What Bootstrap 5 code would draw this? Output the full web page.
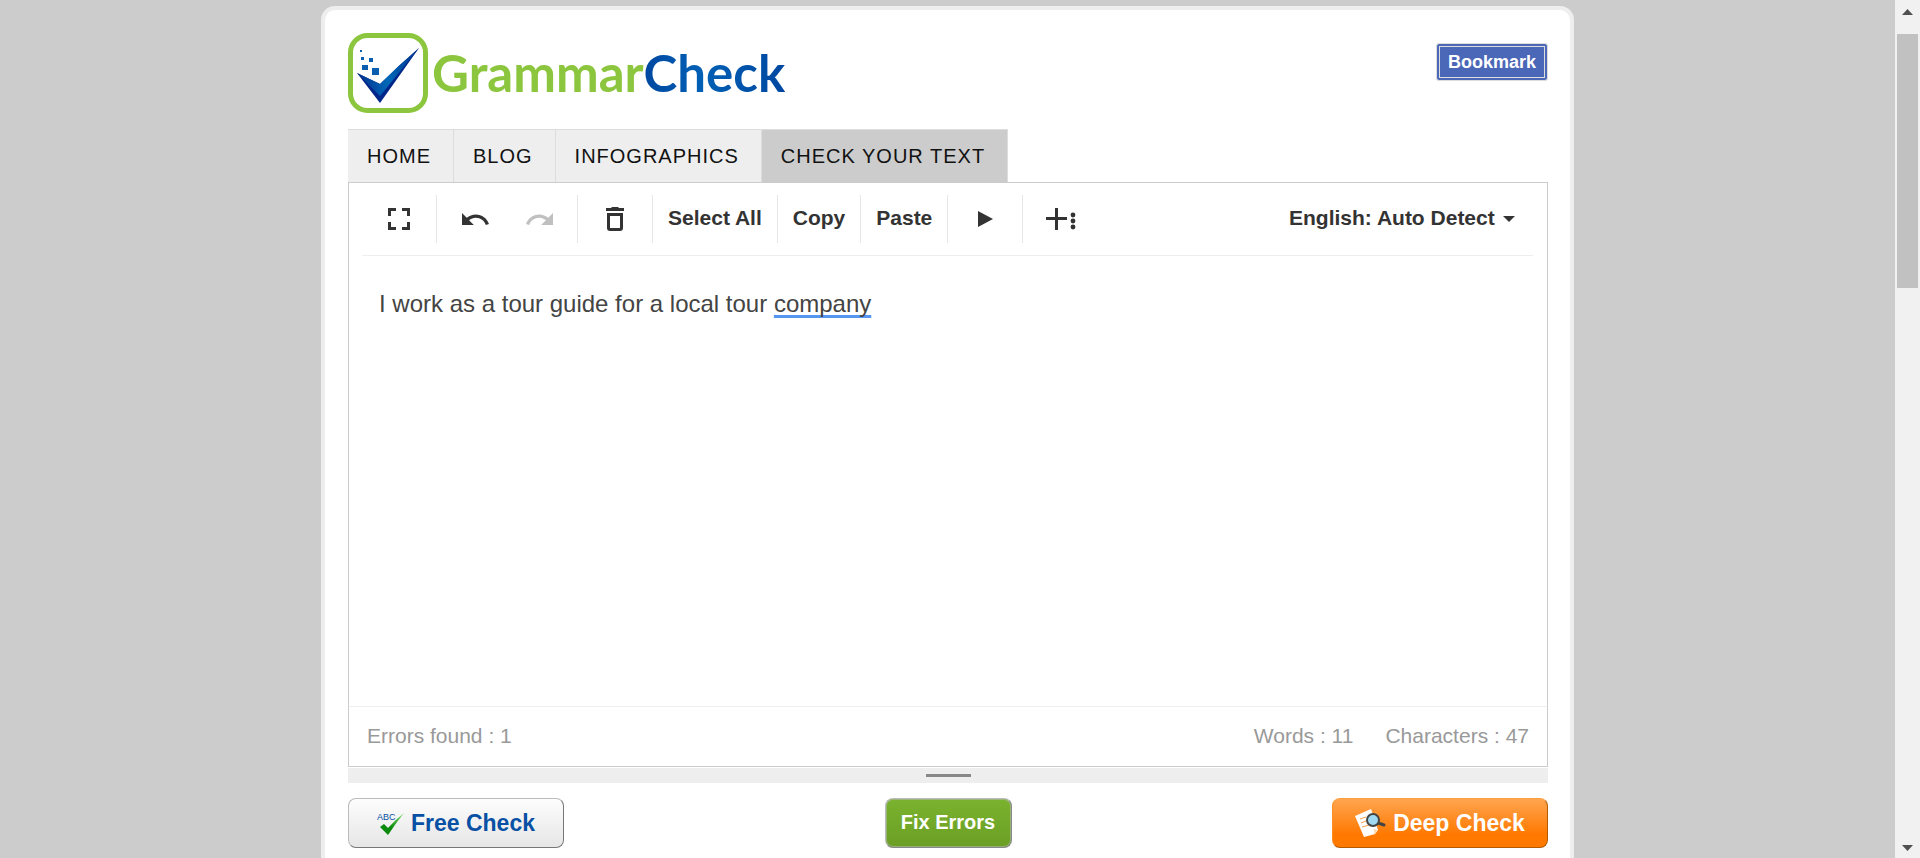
<!DOCTYPE html>
<html lang="en">
<head>
<meta charset="utf-8">
<meta name="viewport" content="width=device-width, initial-scale=1">
<title>GrammarCheck</title>
<link href="https://cdn.jsdelivr.net/npm/bootstrap@5.3.0/dist/css/bootstrap.min.css" rel="stylesheet">
<style>
body { background: #ccc; color: #333; font-family: "Liberation Sans", Arial, sans-serif; }
.page-scroll { flex: 0 0 25px; background: #f1f1f1; padding: 9px 2px 7px; }
.page-scroll .thumb { flex: 0 0 254px; background: #c1c1c1; width: 21px; margin-top: 19px; }
.sheet { max-width: 1253px; background: #fff; border: 4px solid #eee; border-bottom: 0; border-radius: 14px 14px 0 0; margin: 6px auto 0; padding: 23px 22px 0 23px; }
.brand-name { font: 700 51px/60px Lato, sans-serif; color: #8cc63f; }
.brand-name .blue { background: linear-gradient(90deg, #0047a0, #0060b5 40%, #0047a0); -webkit-background-clip: text; background-clip: text; color: transparent; }
.btn-bookmark { background: #4b67b8; color: #fff; font-weight: 700; font-size: 18px; line-height: 20px; margin-top: 10px; padding: 8px 11px; border: 1px solid #ddd; border-radius: 3px; box-shadow: inset 0 0 0 2px #4b67b8, inset 0 0 0 3px #ddd; }
.tabs .nav-link { background: #eee; color: #111; font-size: 20px; line-height: 24px; letter-spacing: 1px; padding: 14px 22px 14px 19px; border: 1px solid #ddd; border-width: 1px 1px 0 0; border-radius: 0; }
.tabs .nav-link.active { background: #ccc; }
.editor { border: 1px solid #ccc; }
.tools { margin: 0 14px 0 13px; padding: 12px 0; border-bottom: 1px solid #eee; }
.tool { height: 48px; border: 0; border-radius: 0; color: #333; background: none; font-weight: 700; font-size: 21px; line-height: 24px; padding: 0 15px 2px; }
.icon-tool { display: inline-flex; align-items: center; justify-content: center; width: 75px; padding: 0; }
.history { padding: 0 6px; }
.history .icon-tool { width: 64px; }
.ruled { border-right: 1px solid #e6e6e6; }
.tool:disabled { color: #c0c0c0; border: 0; opacity: 1; }
.language { gap: 7px; padding-right: 18px; }
.language select { appearance: none; padding: 0 0 2px; outline: 0; }
.writing { min-height: 450px; padding: 34px 30px; font-size: 24px; line-height: 28px; color: #444; outline: 0; }
.hint { text-decoration: underline 3px #5596f0; text-underline-offset: 3px; text-decoration-skip-ink: none; }
.counts { border-top: 1px solid #eee; color: #999; font-size: 21px; line-height: 24px; padding: 17px 18px 18px; }
.totals { gap: 32px; }
.grip { background: #eee; height: 15px; margin-top: 1px; padding-top: 6px; }
.grip span { width: 45px; height: 3px; background: #888; }
.actions { padding-top: 15px; }
.act { display: flex; align-items: center; justify-content: center; gap: 7px; height: 50px; border-radius: 8px; font-weight: 700; padding: 0; }
.act-wide { width: 216px; font-size: 23px; }
.act-free { color: #0750a4; background: linear-gradient(#fdfdfd, #e6e6e6); border: 1px solid; border-color: #bbb #777 #777 #bbb; padding-top: 1px; }
.act-free svg text { font: 400 9px "Liberation Sans", Arial, sans-serif; }
.act-fix { width: 127px; color: #fff; font-size: 20px; padding-bottom: 2px; background: linear-gradient(#7ab32e, #6b9f25); border: 1px solid #bbb; border-right-color: #888; border-bottom-color: #888; box-shadow: inset 0 0 0 1px #bbb8; }
.act-deep { color: #fff; background: linear-gradient(#ffa54f, #ff7800 75%); border: 1px solid; border-color: #ffa040 #b35900 #b35900 #ff9020; }
</style>
</head>
<body class="vh-100 overflow-hidden d-flex">
<main class="flex-grow-1 d-flex overflow-hidden">
<div class="sheet w-100">
  <header class="d-flex justify-content-between align-items-start mb-3">
    <a href="#" class="d-flex align-items-center text-decoration-none" aria-label="GrammarCheck home">
      <svg width="80" height="80" viewBox="0 0 80 80" aria-hidden="true">
        <defs><linearGradient id="tick" x1="0" x2="1"><stop offset="0" stop-color="#00308c"/><stop offset=".5" stop-color="#0068b8"/><stop offset="1" stop-color="#00308c"/></linearGradient></defs>
        <rect x="2.500" y="2.500" width="75" height="75" rx="17" fill="#fff" stroke="#8cc63f" stroke-width="5"/>
        <path d="M9 40 32 51Q50 33 71 15L32 70Z" fill="#00268a"/>
        <path d="M9 40 32 51Q50 33 71 15L32 63Z" fill="url(#tick)"/>
        <path d="M12 17h2v2h-2zM13 24h3v3h-3zM21 25h4v4h-4zM14 32h6v5h-6zM24 35h7v7h-7z" fill="#0a5eb0"/>
      </svg>
      <span class="brand-name ms-1">Grammar<span class="blue">Check</span></span>
    </a>
    <button type="button" class="btn btn-bookmark">Bookmark</button>
  </header>
  <nav class="nav tabs" aria-label="Main">
    <a class="nav-link" href="#">HOME</a>
    <a class="nav-link" href="#">BLOG</a>
    <a class="nav-link" href="#">INFOGRAPHICS</a>
    <a class="nav-link active" href="#" aria-current="page">CHECK YOUR TEXT</a>
  </nav>
  <section class="editor">
    <div class="tools d-flex align-items-center" role="toolbar" aria-label="Editor tools">
      <button type="button" class="btn tool icon-tool ruled" aria-label="Full screen"><svg width="22" height="22" viewBox="0 0 22 22" fill="none" stroke="currentColor" stroke-width="3"><path d="M1.500 8V1.500H8M14 1.500h6.500V8M20.500 14v6.500H14M8 20.500H1.500V14"/></svg></button>
      <div class="history d-flex ruled">
        <button type="button" class="btn tool icon-tool" aria-label="Undo"><svg width="27" height="12" viewBox="2 7 20.500 9" fill="currentColor"><path d="M12.500 8c-2.650 0-5.050.99-6.900 2.600L2 7v9h9l-3.620-3.620c1.390-1.160 3.160-1.880 5.120-1.880 3.540 0 6.550 2.310 7.600 5.500l2.370-.78C21.080 11.030 17.150 8 12.500 8z"/></svg></button>
        <button type="button" class="btn tool icon-tool" aria-label="Redo" disabled><svg width="27" height="12" viewBox="2 7 20.500 9" fill="currentColor"><path transform="matrix(-1 0 0 1 24.500 0)" d="M12.500 8c-2.650 0-5.050.99-6.900 2.600L2 7v9h9l-3.620-3.620c1.390-1.160 3.160-1.880 5.120-1.880 3.540 0 6.550 2.310 7.600 5.500l2.370-.78C21.080 11.030 17.150 8 12.500 8z"/></svg></button>
      </div>
      <button type="button" class="btn tool icon-tool ruled" aria-label="Delete"><svg width="18" height="24" viewBox="0 0 18 24" fill="currentColor"><path d="M0 1h5l1-1h6l1 1h5v3H0zM1 6h16v15a3 3 0 0 1-3 3H4a3 3 0 0 1-3-3zM4 9v12h10V9z" fill-rule="evenodd"/></svg></button>
      <button type="button" class="btn tool ruled">Select All</button>
      <button type="button" class="btn tool ruled">Copy</button>
      <button type="button" class="btn tool ruled">Paste</button>
      <button type="button" class="btn tool icon-tool ruled" aria-label="Play"><svg width="15" height="16" viewBox="0 0 15 16" fill="currentColor"><path d="M0 0 15 8 0 16z"/></svg></button>
      <button type="button" class="btn tool icon-tool" aria-label="More"><svg width="30" height="22" viewBox="0 0 30 22" fill="currentColor"><path d="M9 0h3v9h9v3h-9v10H9V12H0V9h9z"/><circle cx="27" cy="7" r="2.400"/><circle cx="27" cy="13" r="2.400"/><circle cx="27" cy="19" r="2.400"/></svg></button>
      <label class="language ms-auto d-flex align-items-center">
        <select class="tool" aria-label="Language"><option>English: Auto Detect</option></select>
        <svg width="12" height="6" viewBox="0 0 12 6" aria-hidden="true"><path d="M0 0h12L6 6z" fill="#333"/></svg>
      </label>
    </div>
    <div class="writing" contenteditable="true" role="textbox" aria-multiline="true" aria-label="Your text" spellcheck="false">I work as a tour guide for a local tour <span class="hint">company</span></div>
    <div class="counts d-flex justify-content-between"><span>Errors found : 1</span><div class="totals d-flex"><span>Words : 11</span><span>Characters : 47</span></div></div>
  </section>
  <div class="grip d-flex justify-content-center"><span></span></div>
  <div class="actions d-flex justify-content-between">
    <button type="button" class="btn act act-wide act-free">
      <svg width="27" height="24" viewBox="0 0 27 24" aria-hidden="true">
        <defs><linearGradient id="leaf" x1="0" y1="1" x2="1" y2="0"><stop offset=".4" stop-color="#0b8a0b"/><stop offset="1" stop-color="#8fe67a"/></linearGradient></defs>
        <text x="0" y="8" fill="#0750a4">ABC</text>
        <path d="M3 15 7 12 11 16Q18 8 27 1 19 11 11 23Z" fill="url(#leaf)"/>
      </svg>
      <span>Free Check</span>
    </button>
    <button type="button" class="btn act act-fix">Fix Errors</button>
    <button type="button" class="btn act act-wide act-deep">
      <svg width="31" height="29" viewBox="0 0 31 29" aria-hidden="true">
        <path d="M0 7 16 0 23 21 20 25 9 28Z" fill="#fff"/>
        <path d="M5 10 11 8M6 14 11 12M7 18 14 16" stroke="#f3a050" stroke-width="1"/>
        <path d="M19 26 19 20 23 21Z" fill="#ffd9b0"/>
        <path d="M23 14 29 16" stroke="#444" stroke-width="3" stroke-linecap="round"/>
        <circle cx="18" cy="11" r="6" fill="#9fd8f0" stroke="#444" stroke-width="2"/>
      </svg>
      <span>Deep Check</span>
    </button>
  </div>
</div>
</main>
<div class="page-scroll d-flex flex-column align-items-center" aria-hidden="true">
  <svg width="11" height="6" viewBox="0 0 11 6"><path d="M0 6 5.500 0 11 6z" fill="#505050"/></svg>
  <div class="thumb"></div>
  <svg class="mt-auto" width="11" height="6" viewBox="0 0 11 6"><path d="M0 0h11L5.500 6z" fill="#505050"/></svg>
</div>
<script src="https://cdn.jsdelivr.net/npm/bootstrap@5.3.0/dist/js/bootstrap.bundle.min.js"></script>
</body>
</html>
